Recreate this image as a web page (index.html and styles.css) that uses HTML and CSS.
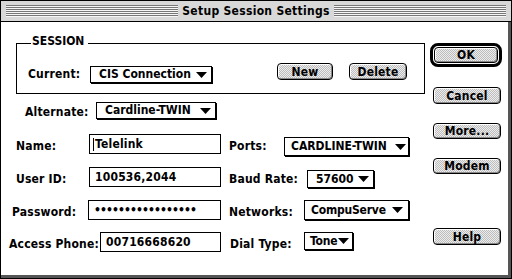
FILE: index.html
```html
<!DOCTYPE html>
<html>
<head>
<meta charset="utf-8">
<title>Setup Session Settings</title>
<link rel="stylesheet" href="styles.css">
</head>
<body>
<div class="window">
  <div class="titlebar">
    <div class="stripes"></div>
    <div class="title">Setup Session Settings</div>
    <div class="stripes"></div>
  </div>
  <div class="content">
    <div class="main">
      <div class="group">
        <div class="legend">SESSION</div>
        <div class="row row-current">
          <span class="label lbl-current">Current:</span>
          <div class="popup pop-current"><span>CIS Connection</span><svg class="tri" width="11" height="6" viewBox="0 0 11 6"><polygon points="0,0 11,0 5.5,6"/></svg></div>
          <div class="btn btn-new">New</div>
          <div class="btn btn-delete">Delete</div>
        </div>
      </div>

      <div class="row row-alt">
        <span class="label lbl-alt">Alternate:</span>
        <div class="popup pop-alt"><span>Cardline-TWIN</span><svg class="tri" width="11" height="6" viewBox="0 0 11 6"><polygon points="0,0 11,0 5.5,6"/></svg></div>
      </div>

      <div class="row row-form row-name">
        <span class="label lbl-name">Name:</span>
        <div class="field f-name"><span class="caret"></span>Telelink</div>
        <span class="label lbl2 lbl-ports">Ports:</span>
        <div class="popup pop-ports"><span>CARDLINE-TWIN</span><svg class="tri" width="11" height="6" viewBox="0 0 11 6"><polygon points="0,0 11,0 5.5,6"/></svg></div>
      </div>

      <div class="row row-form row-user">
        <span class="label lbl-user">User ID:</span>
        <div class="field f-user">100536,2044</div>
        <span class="label lbl2 lbl-baud">Baud Rate:</span>
        <div class="popup pop-baud"><span>57600</span><svg class="tri" width="11" height="6" viewBox="0 0 11 6"><polygon points="0,0 11,0 5.5,6"/></svg></div>
      </div>

      <div class="row row-form row-pass">
        <span class="label lbl-pass">Password:</span>
        <div class="field f-pass">•••••••••••••••••</div>
        <span class="label lbl2 lbl-net">Networks:</span>
        <div class="popup pop-net"><span>CompuServe</span><svg class="tri" width="11" height="6" viewBox="0 0 11 6"><polygon points="0,0 11,0 5.5,6"/></svg></div>
      </div>

      <div class="row row-form row-access">
        <span class="label lbl-access">Access Phone:</span>
        <div class="field f-access">00716668620</div>
        <span class="label lbl2 lbl-dial">Dial Type:</span>
        <div class="popup pop-tone"><span>Tone</span><svg class="tri" width="11" height="6" viewBox="0 0 11 6"><polygon points="0,0 11,0 5.5,6"/></svg></div>
      </div>
    </div>

    <div class="side">
      <div class="okring"><div class="btn btn-ok">OK</div></div>
      <div class="btn btn-side btn-cancel">Cancel</div>
      <div class="btn btn-side btn-more">More...</div>
      <div class="btn btn-side btn-modem">Modem</div>
      <div class="btn btn-side btn-help">Help</div>
    </div>
  </div>
</div>
</body>
</html>
```

FILE: styles.css
```css
* { box-sizing: border-box; }
html, body { margin: 0; padding: 0; background: #fff; }
body {
  width: 512px;
  height: 279px;
  overflow: hidden;
  font-family: "DejaVu Sans Condensed", "DejaVu Sans", "Liberation Sans", sans-serif;
  font-stretch: condensed;
  font-weight: bold;
  font-size: 12px;
  letter-spacing: 0.2px;
  color: #000;
}

.window {
  width: 512px;
  height: 279px;
  border: 1px solid #000;
  display: flex;
  flex-direction: column;
}

.titlebar {
  height: 21px;
  flex: none;
  border-bottom: 1px solid #000;
  background: #d8d8d8;
  display: flex;
  align-items: center;
  padding: 0 5px;
}
.stripes {
  flex: 1;
  height: 12px;
  background: repeating-linear-gradient(to bottom, #777 0 1px, #f6f6f6 1px 2px);
}
.title {
  padding: 0 4px;
  line-height: 15px;
  letter-spacing: 0.3px;
}

.content {
  flex: 1;
  display: flex;
  background: #fff;
  border-right: 3px solid #555;
  border-bottom: 3px solid #555;
}

.main {
  width: 428px;
  flex: none;
  padding-top: 21px;
}

.label { line-height: 15px; white-space: nowrap; }

.row { display: flex; align-items: flex-start; }

/* SESSION group */
.group {
  margin-left: 15px;
  width: 409px;
  height: 51px;
  border: 1px solid #000;
}
.legend {
  width: max-content;
  margin: -10px 0 0 14px;
  padding: 0 4px 0 1px;
  background: #fff;
  line-height: 15px;
  letter-spacing: 0;
}
.row-current { margin-top: 14px; padding-left: 11px; }
.lbl-current { width: 62px; margin-top: 3px; line-height: 17px; }
.pop-current { width: 122px; margin-top: 3px; }
.btn-new { width: 56px; height: 17px; margin-left: 65px; }
.btn-delete { width: 58px; height: 17px; margin-left: 16px; }

/* popups */
.popup {
  display: flex;
  align-items: center;
  justify-content: space-between;
  height: 17px;
  border: 1px solid #000;
  box-shadow: 1px 1px 0 #000;
  background: #fff;
  padding: 0 4px 0 8px;
  line-height: 15px;
  white-space: nowrap;
  letter-spacing: 0;
}
.tri { display: block; flex: none; fill: #000; }

/* text fields */
.field {
  height: 20px;
  border: 1px solid #000;
  background: #fff;
  padding-left: 5px;
  line-height: 18px;
  white-space: nowrap;
  display: flex;
  align-items: center;
}
.caret {
  display: inline-block;
  width: 1px;
  height: 13px;
  background: #000;
  margin-left: -1px;
  margin-right: 1px;
}

/* alternate row */
.row-alt { margin-top: 8px; padding-left: 24px; height: 17px; }
.lbl-alt { width: 71px; margin-top: 3px; }
.pop-alt { width: 120px; }

/* form rows */
.row-form { height: 20px; }
.row-form .label { margin-top: 5px; }
.lbl2 { margin-left: 8px; }

.row-name { margin-top: 15px; padding-left: 15px; }
.lbl-name { width: 73px; }
.f-name { width: 132px; padding-left: 4px; }
.lbl-ports { width: 55px; }
.pop-ports { width: 125px; height: 19px; margin-top: 3px; padding-left: 6px; padding-right: 2px; }

.row-user { margin-top: 13px; padding-left: 15px; }
.lbl-user { width: 73px; }
.f-user { width: 132px; }
.lbl-baud { width: 78px; }
.pop-baud { width: 67px; height: 18px; margin-top: 3px; }

.row-pass { margin-top: 13px; padding-left: 11px; }
.lbl-pass { width: 76px; }
.f-pass { width: 133px; letter-spacing: -0.9px; }
.lbl-net { width: 75px; }
.pop-net { width: 105px; height: 20px; padding-left: 6px; padding-right: 5px; letter-spacing: -0.2px; }

.row-access { margin-top: 12px; padding-left: 8px; }
.lbl-access { width: 91px; }
.f-access { width: 121px; }
.lbl-dial { width: 74px; margin-left: 9px; }
.pop-tone { width: 49px; height: 18px; padding-left: 5px; padding-right: 3px; letter-spacing: -0.2px; }

/* buttons */
.btn {
  display: flex;
  align-items: center;
  justify-content: center;
  border: 1px solid #000;
  border-radius: 4px;
  background: repeating-conic-gradient(#bdbdbd 0 25%, #ececec 0 50%) 0 0 / 2px 2px;
  box-shadow: inset 1px 1px 0 #fff, inset -1px -1px 0 #888;
  line-height: 14px;
  white-space: nowrap;
  flex: none;
}

.side {
  flex: 1;
  display: flex;
  flex-direction: column;
  align-items: flex-start;
  padding-top: 21px;
}
.okring {
  margin-left: 1px;
  width: 72px;
  height: 24px;
  border: 3px solid #000;
  border-radius: 8px;
  padding: 1px;
  background: #fff;
}
.btn-ok { width: 100%; height: 100%; }
.btn-side { margin-left: 4px; width: 68px; }
.btn-cancel { height: 17px; margin-top: 20px; }
.btn-more { height: 16px; margin-top: 19px; }
.btn-modem { height: 16px; margin-top: 19px; }
.btn-help { height: 17px; margin-top: 54px; }
```
